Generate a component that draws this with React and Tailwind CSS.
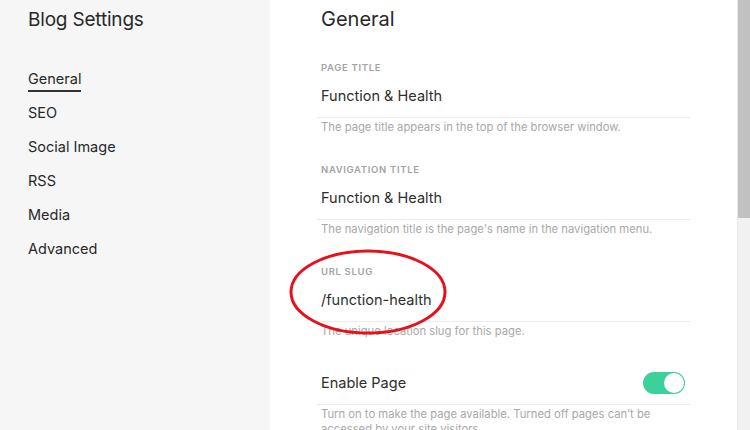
import React from 'react';

const navItems = ['General', 'SEO', 'Social Image', 'RSS', 'Media', 'Advanced'];

const Field = ({ label, value, help, className = '' }) => (
  <div className={className}>
    <div className="h-[14px] px-1 text-[9.5px] leading-[14px] font-semibold tracking-[0.07em] uppercase text-[#a3a3a3]">
      {label}
    </div>
    <div className="h-[42px] px-1 flex items-center text-[14.5px] text-[#2e2e2e]">{value}</div>
    <div className="h-px bg-[#ececec]" />
    <p className="mt-[2px] px-1 text-[11.25px] leading-[14px] text-[#a8a8a8]">{help}</p>
  </div>
);

const App = () => {
  return (
    <div
      className="w-[750px] h-[430px] overflow-hidden flex bg-white"
      style={{ fontFamily: 'Inter, "Noto Sans", sans-serif' }}
    >
      {/* sidebar */}
      <aside className="w-[270px] shrink-0 bg-[#f6f6f6] pl-[28px] pt-[8px]">
        <h1 className="text-[19px] leading-[24px] text-[#282828] tracking-[-0.01em]">Blog Settings</h1>
        <ul className="mt-[36px]">
          {navItems.map((item, i) => (
            <li key={item} className="h-[34px] text-[14.5px] text-[#282828]">
              <span
                className={
                  i === 0
                    ? 'inline-block leading-[18px] pb-[2px] border-b-2 border-[#333]'
                    : 'inline-block leading-[18px]'
                }
              >
                {item}
              </span>
            </li>
          ))}
        </ul>
      </aside>

      {/* main */}
      <main className="relative flex-1 pl-[47px] pr-[47px] pt-[7px]">
        <h2 className="px-1 text-[20px] leading-[24px] text-[#282828]">General</h2>

        <Field
          className="mt-[30px]"
          label="Page Title"
          value="Function & Health"
          help="The page title appears in the top of the browser window."
        />
        <Field
          className="mt-[29px]"
          label="Navigation Title"
          value="Function & Health"
          help="The navigation title is the page's name in the navigation menu."
        />
        <Field
          className="mt-[29px]"
          label="URL Slug"
          value="/function-health"
          help="The unique location slug for this page."
        />

        <div className="mt-[24px]">
          <div className="h-[42px] pl-1 pr-[5px] flex items-center justify-between text-[14.5px] text-[#2e2e2e]">
            <span>Enable Page</span>
            <div className="w-[42px] h-[22px] rounded-full bg-[#3ad29a] p-[1px] flex justify-end">
              <div className="w-[20px] h-[20px] rounded-full bg-white" />
            </div>
          </div>
          <div className="h-px bg-[#ececec]" />
          <p className="mt-[2px] px-1 text-[11.25px] leading-[15px] text-[#a8a8a8]">
            Turn on to make the page available. Turned off pages can’t be accessed by your site visitors.
          </p>
        </div>

        {/* red annotation ellipse */}
        <svg className="absolute left-[18px] top-[247px]" width="162" height="92" viewBox="0 0 162 92">
          <ellipse cx="80" cy="45" rx="77" ry="41" fill="none" stroke="#e5121c" strokeWidth="3" />
        </svg>
      </main>

      {/* scrollbar */}
      <div className="w-[13px] shrink-0 bg-[#f1f1f1] border-l border-[#e8e8e8]">
        <div className="h-[218px] bg-[#c1c1c1]" />
      </div>
    </div>
  );
};

export default App;
